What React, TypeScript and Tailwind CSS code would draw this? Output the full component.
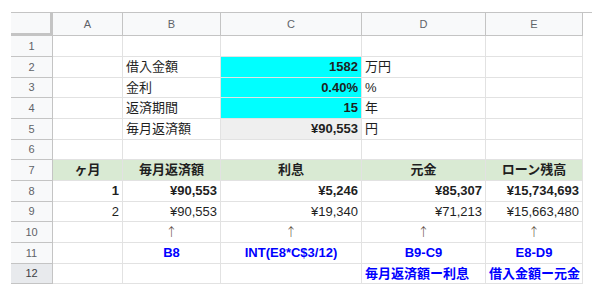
import React from "react";

type Cell = {
  t?: string;
  a?: "l" | "c" | "r";
  b?: boolean;
  bg?: string;
  blue?: boolean;
  arrow?: boolean;
};

const colW = ["w-[70px]", "w-[98px]", "w-[141px]", "w-[124px]", "w-[97px]"];
const rowH = ["h-[21px]", "h-[21px]", "h-[20px]"];

const rows: Cell[][] = [
  [{}, {}, {}, {}, {}],
  [{}, { t: "借入金額" }, { t: "1582", a: "r", b: true, bg: "bg-[#00ffff]" }, { t: "万円" }, {}],
  [{}, { t: "金利" }, { t: "0.40%", a: "r", b: true, bg: "bg-[#00ffff]" }, { t: "%" }, {}],
  [{}, { t: "返済期間" }, { t: "15", a: "r", b: true, bg: "bg-[#00ffff]" }, { t: "年" }, {}],
  [{}, { t: "毎月返済額" }, { t: "¥90,553", a: "r", b: true, bg: "bg-[#efefef]" }, { t: "円" }, {}],
  [{}, {}, {}, {}, {}],
  [
    { t: "ヶ月", a: "c", b: true, bg: "bg-[#d9ead3]" },
    { t: "毎月返済額", a: "c", b: true, bg: "bg-[#d9ead3]" },
    { t: "利息", a: "c", b: true, bg: "bg-[#d9ead3]" },
    { t: "元金", a: "c", b: true, bg: "bg-[#d9ead3]" },
    { t: "ローン残高", a: "c", b: true, bg: "bg-[#d9ead3]" },
  ],
  [
    { t: "1", a: "r", b: true },
    { t: "¥90,553", a: "r", b: true },
    { t: "¥5,246", a: "r", b: true },
    { t: "¥85,307", a: "r", b: true },
    { t: "¥15,734,693", a: "r", b: true },
  ],
  [
    { t: "2", a: "r" },
    { t: "¥90,553", a: "r" },
    { t: "¥19,340", a: "r" },
    { t: "¥71,213", a: "r" },
    { t: "¥15,663,480", a: "r" },
  ],
  [
    {},
    { t: "↑", a: "c", arrow: true },
    { t: "↑", a: "c", arrow: true },
    { t: "↑", a: "c", arrow: true },
    { t: "↑", a: "c", arrow: true },
  ],
  [
    {},
    { t: "B8", a: "c", b: true, blue: true },
    { t: "INT(E8*C$3/12)", a: "c", b: true, blue: true },
    { t: "B9-C9", a: "c", b: true, blue: true },
    { t: "E8-D9", a: "c", b: true, blue: true },
  ],
  [
    {},
    {},
    {},
    { t: "毎月返済額ー利息", b: true, blue: true },
    { t: "借入金額ー元金", b: true, blue: true },
  ],
];

const font = "font-['Liberation_Sans','Noto_Sans_CJK_JP',sans-serif]";

export default function App() {
  return (
    <div className={`h-[295px] w-[592px] bg-white pl-[11px] pt-[12px] ${font}`}>
      <div className="flex border-t border-[#c4c4c4]">
        <div className="h-[23px] w-[42px] border-b-[3px] border-r-[3px] border-[#c4c4c4] bg-[#f8f9fa]" />
        {["A", "B", "C", "D", "E"].map((c, i) => (
          <div
            key={c}
            className={`${colW[i]} flex h-[23px] items-center justify-center border-b border-r border-[#c4c4c4] bg-[#f8f9fa] text-[11px] text-[#5f6368]`}
          >
            {c}
          </div>
        ))}
      </div>
      {rows.map((row, r) => (
        <div key={r} className="flex">
          <div
            className={`${rowH[r % 3]} flex w-[42px] items-center justify-center border-b border-r border-[#c4c4c4] text-[11px] ${
              r === 11 ? "bg-[#e8eaed] text-[#3c4043]" : "bg-[#f8f9fa] text-[#5f6368]"
            }`}
          >
            {r + 1}
          </div>
          {row.map((c, i) => (
            <div
              key={i}
              className={`${colW[i]} ${rowH[r % 3]} flex items-center overflow-visible whitespace-nowrap border-b border-r border-[#e2e2e2] px-[3px] text-[13px] ${
                c.a === "r" ? "justify-end" : c.a === "c" ? "justify-center" : "justify-start"
              } ${c.bg ?? "bg-white"} ${c.b ? "font-bold" : ""} ${
                c.blue ? "text-[#0000ff]" : c.arrow ? "text-[#5a4a3a]" : "text-[#1f1f1f]"
              }`}
            >
              {c.arrow ? (
                <span className="font-['Noto_Sans_CJK_JP',sans-serif] text-[12px] font-light">{c.t}</span>
              ) : (
                c.t
              )}
            </div>
          ))}
        </div>
      ))}
    </div>
  );
}
